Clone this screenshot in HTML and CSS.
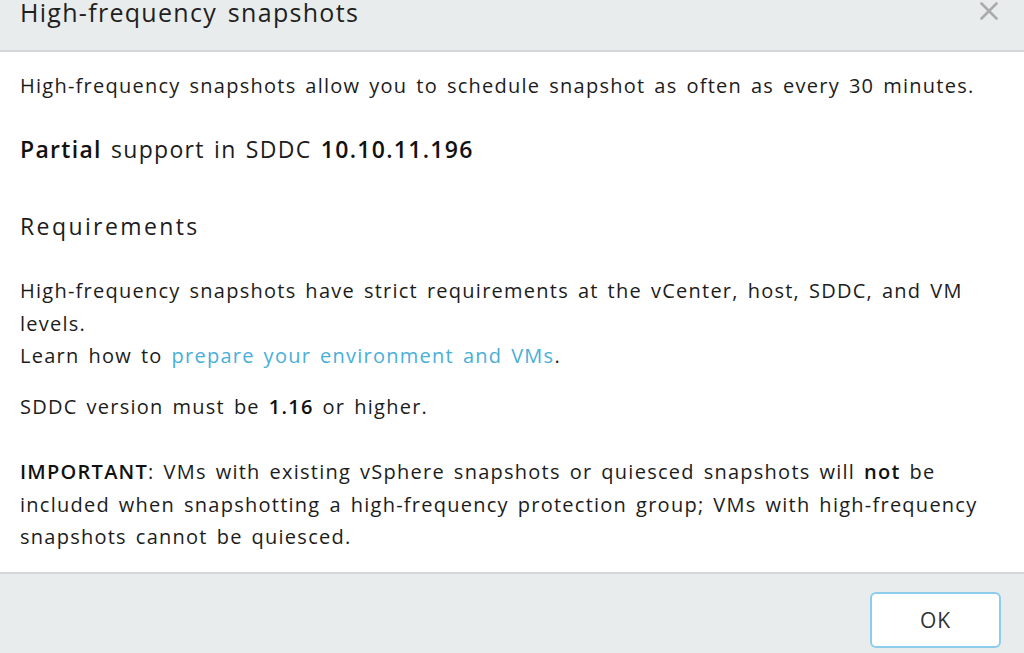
FILE: index.html
```html
<!DOCTYPE html>
<html lang="en">
<head>
    <meta charset="UTF-8">
    <meta name="viewport" content="width=device-width, initial-scale=1.0">
    <title>High-frequency snapshots</title>
    <link rel="stylesheet" href="styles.css">
</head>
<body>
    <div class="modal">
        <!-- header -->
        <div class="modal-header">
            <h3 class="modal-title">High-frequency snapshots</h3>
            <button class="close" aria-label="Close">
                <svg width="18" height="18" viewBox="0 0 18 18">
                    <path d="M1.5 1.5 L16.5 16.5 M16.5 1.5 L1.5 16.5" stroke="#a9abad" stroke-width="2.6" stroke-linecap="round" fill="none"/>
                </svg>
            </button>
        </div>

        <!-- body -->
        <div class="modal-body">
            <p class="intro">High-frequency snapshots allow you to schedule snapshot as often as every 30 minutes.</p>
            <h4 class="support"><span class="strong">Partial</span> support in SDDC <span class="strong">10.10.11.196</span></h4>
            <h4 class="req-title">Requirements</h4>
            <p class="req-env">High-frequency snapshots have strict requirements at the vCenter, host, SDDC, and VM levels.<br>
                Learn how to <a href="#">prepare your environment and VMs</a>.</p>
            <p class="req-version">SDDC version must be <span class="strong">1.16</span> or higher.</p>
            <p class="req-note"><span class="strong">IMPORTANT</span>: VMs with existing vSphere snapshots or quiesced snapshots will <span class="strong">not</span> be included when snapshotting a high-frequency protection group; VMs with high-frequency snapshots cannot be quiesced.</p>
        </div>

        <!-- footer -->
        <div class="modal-footer">
            <button class="btn">OK</button>
        </div>
    </div>
</body>
</html>
```

FILE: styles.css
```css
/* page */
body, html {
    margin: 0;
    padding: 0;
    font-family: "Open Sans", Lato, sans-serif;
    background-color: #fff;
    color: #1c1c1c;
    overflow: hidden;
}

.modal {
    width: 1024px;
    height: 653px;
    display: flex;
    flex-direction: column;
}

/* header */
.modal-header {
    height: 50px;
    background-color: #e9ecec;
    border-bottom: 2px solid #d5d7d8;
    display: flex;
    justify-content: space-between;
    align-items: flex-start;
    padding: 0 20px;
}

.modal-title {
    margin: -2px 0 0;
    font-size: 25px;
    font-weight: 400;
    line-height: 28px;
    letter-spacing: 1.3px;
    word-spacing: 3px;
    color: #1f1f1f;
}

.close {
    background: none;
    border: none;
    padding: 0;
    margin-top: 2px;
    margin-right: 6px;
    cursor: pointer;
}

/* body */
.modal-body {
    height: 520px;
    padding: 18px 20px 0;
    box-sizing: border-box;
}

.modal-body p {
    margin: 0;
    font-size: 20px;
    line-height: 32.5px;
    letter-spacing: 1.25px;
    word-spacing: 2.5px;
}

.modal-body h4 {
    font-size: 23px;
    font-weight: 400;
    line-height: 32px;
}

.support {
    margin: 30.5px 0 0;
    letter-spacing: 1.3px;
    word-spacing: 2px;
}

.req-title {
    margin: 45px 0 0;
    letter-spacing: 2.4px;
}

.modal-body .req-env {
    margin-top: 33px;
}

.modal-body .req-version {
    margin-top: 18.5px;
}

.modal-body .req-note {
    margin-top: 32.5px;
}

.strong {
    font-weight: 600;
    color: #111;
}

a {
    color: #49afd9;
    text-decoration: none;
}

/* footer */
.modal-footer {
    flex: 1;
    background-color: #e9ecec;
    border-top: 2px solid #d5d7d8;
    display: flex;
    justify-content: flex-end;
    align-items: flex-start;
    padding: 18px 23px 0;
}

.btn {
    width: 131px;
    height: 56px;
    background-color: #fff;
    border: 2px solid #8ccdec;
    border-radius: 6px;
    font-family: "Open Sans", Lato, sans-serif;
    font-size: 21px;
    letter-spacing: 1px;
    color: #333;
    cursor: pointer;
}
```
